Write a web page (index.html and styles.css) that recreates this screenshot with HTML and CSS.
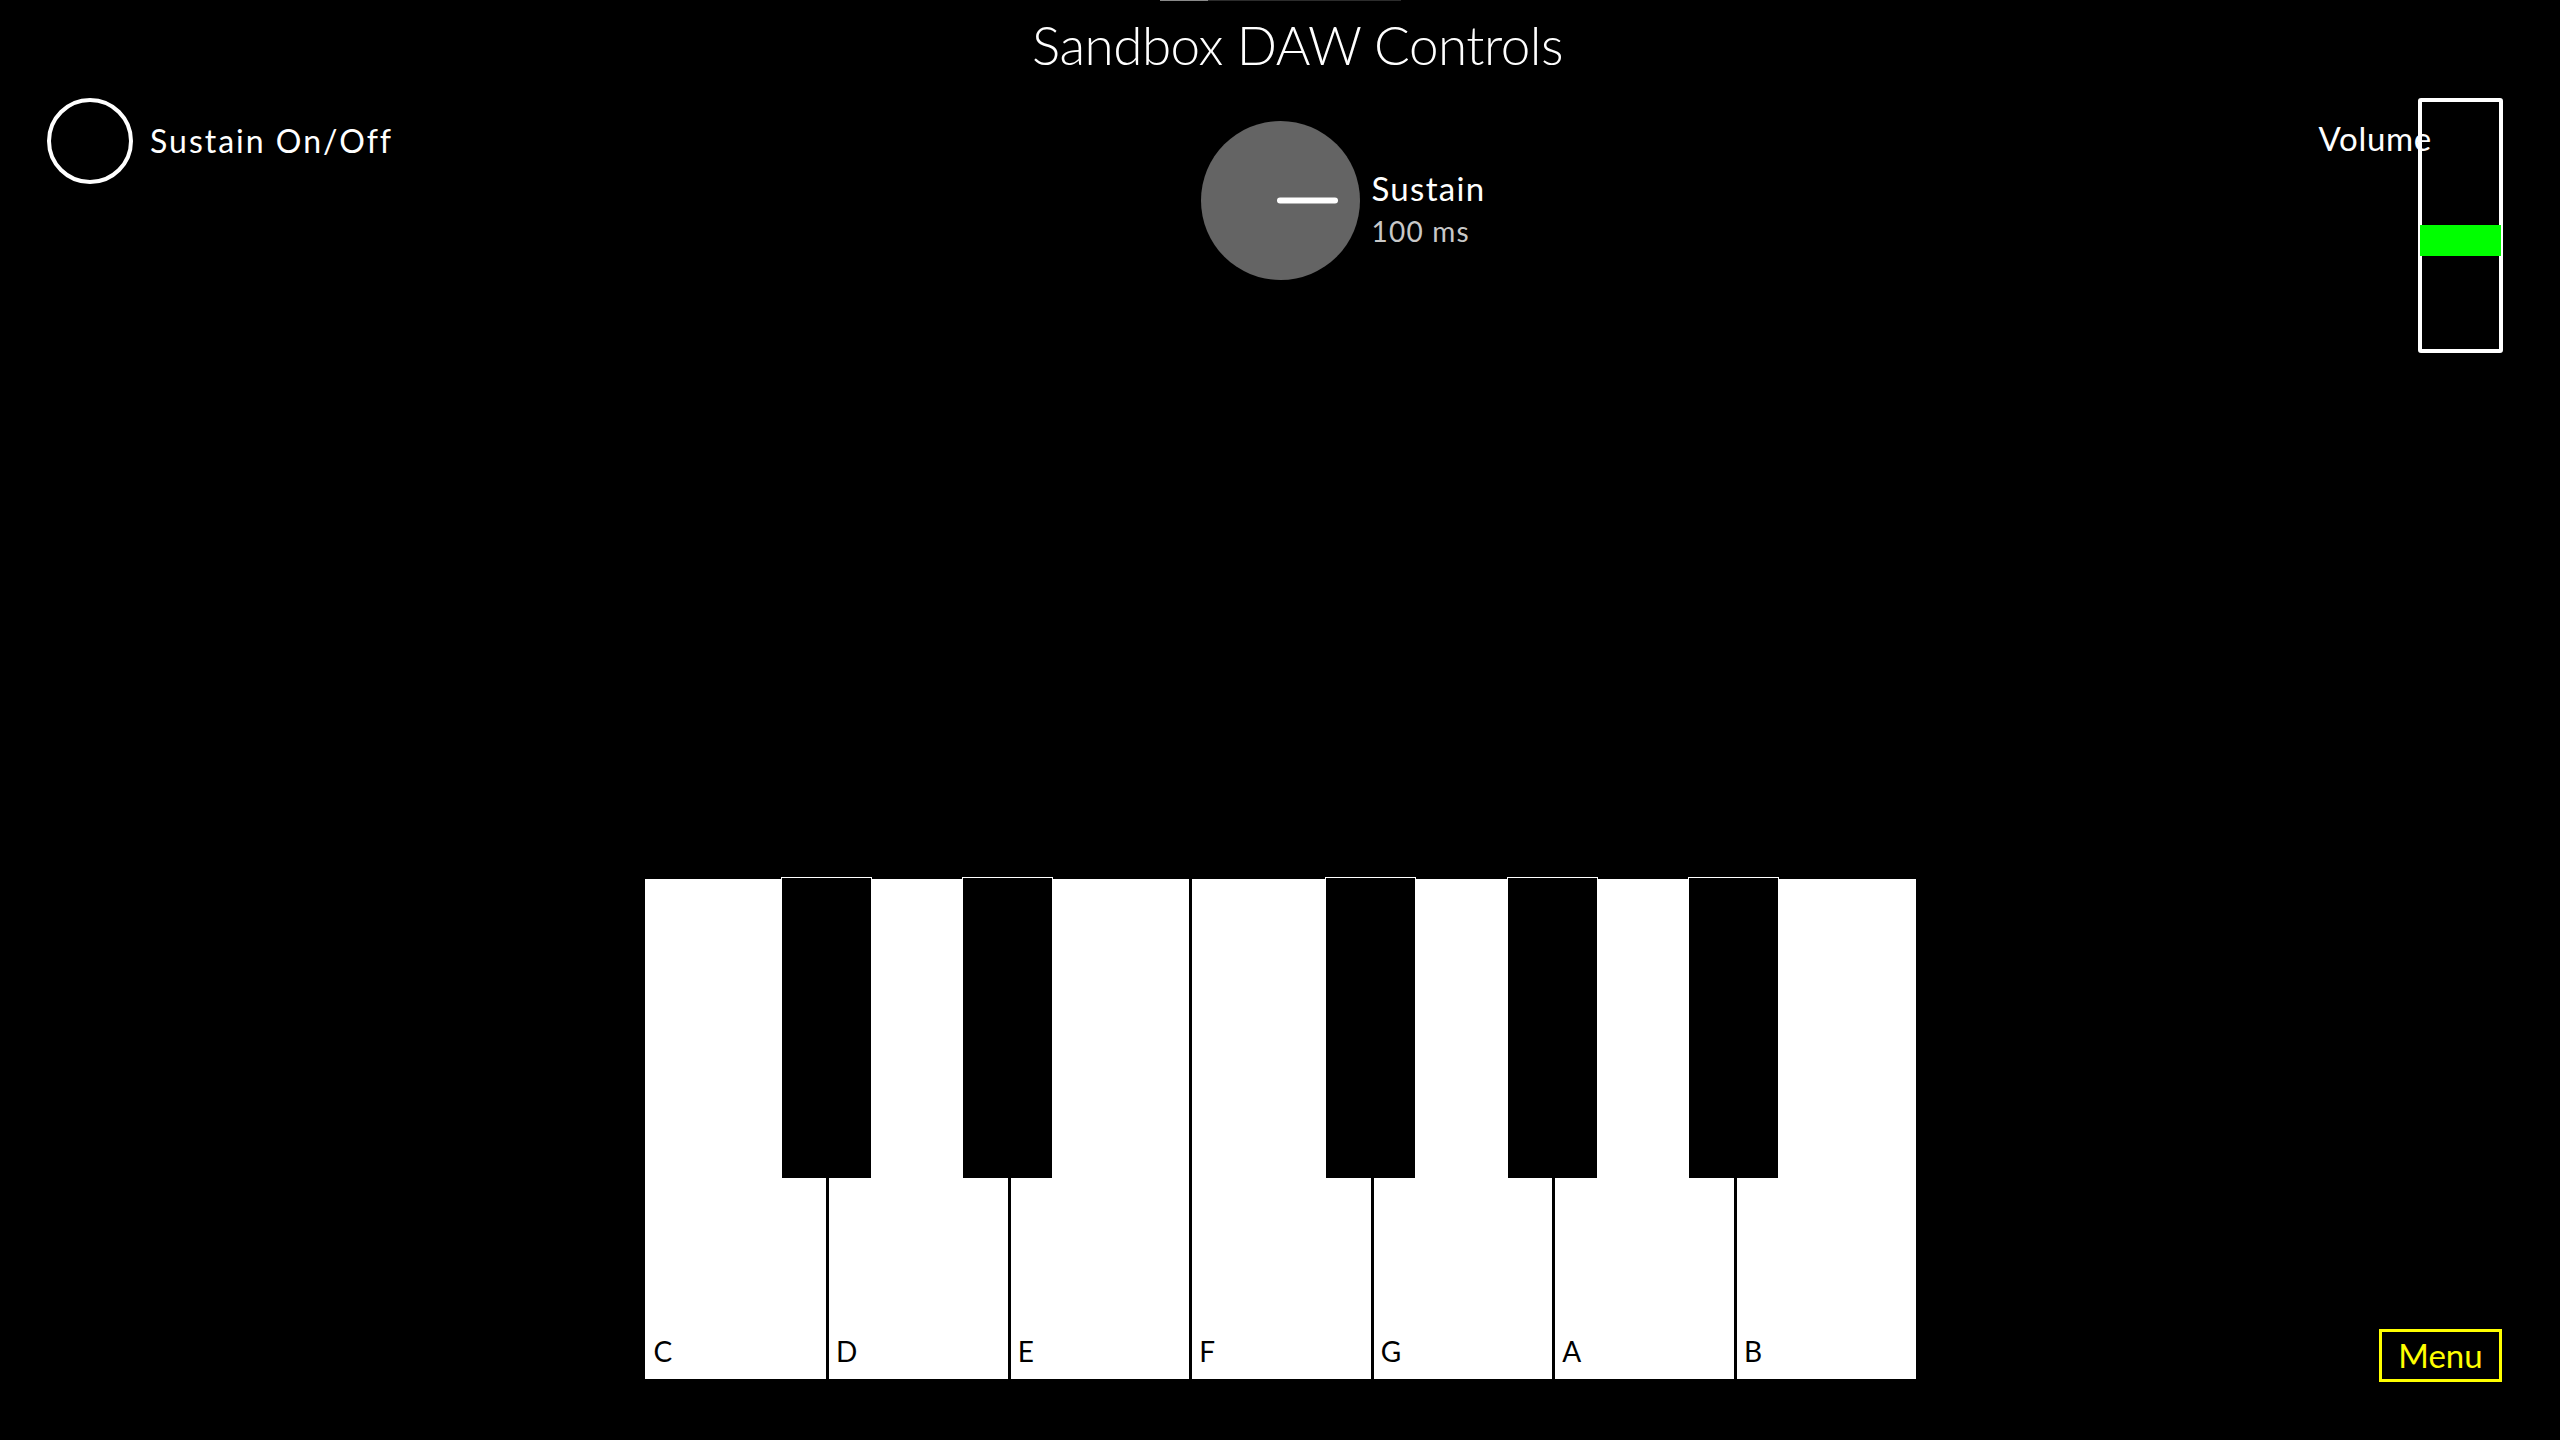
FILE: index.html
```html
<!DOCTYPE html>
<html lang="en">
<head>
<meta charset="utf-8">
<title>Sandbox DAW Controls</title>
<link rel="stylesheet" href="styles.css">
</head>
<body>
<div class="app">
  <div class="progress"><div class="progress-fill"></div></div>
  <h1 class="title">Sandbox DAW Controls</h1>

  <div class="controls">
    <div class="toggle">
      <div class="toggle-ring"></div>
      <span class="toggle-label">Sustain On/Off</span>
    </div>

    <div class="knob">
      <svg class="knob-svg" width="159" height="159" viewBox="0 0 159 159">
        <circle cx="79.5" cy="79.5" r="79.5" fill="#646464"/>
        <line x1="79" y1="79.5" x2="134" y2="79.5" stroke="#ffffff" stroke-width="6" stroke-linecap="round"/>
      </svg>
    </div>

    <div class="right-col">
      <div class="knob-label">
        <div class="knob-name">Sustain</div>
        <div class="knob-value">100 ms</div>
      </div>
      <div class="volume">
        <span class="volume-label">Volume</span>
        <div class="slider">
          <div class="slider-thumb"></div>
        </div>
      </div>
    </div>
  </div>

  <div class="spacer"></div>

  <div class="bottom">
    <div class="piano">
      <div class="wkey"><span class="klabel">C</span></div>
      <div class="wkey"><span class="klabel">D</span></div>
      <div class="wkey"><span class="klabel">E</span></div>
      <div class="wkey"><span class="klabel">F</span></div>
      <div class="wkey"><span class="klabel">G</span></div>
      <div class="wkey"><span class="klabel">A</span></div>
      <div class="wkey"><span class="klabel">B</span></div>
      <div class="bkey bkey-1"></div>
      <div class="bkey bkey-2"></div>
      <div class="bkey bkey-4"></div>
      <div class="bkey bkey-5"></div>
      <div class="bkey bkey-6"></div>
    </div>
    <button class="menu">Menu</button>
  </div>
</div>
</body>
</html>
```

FILE: styles.css
```css
* { box-sizing: border-box; }

html, body {
  margin: 0;
  padding: 0;
  background: #000;
}

body {
  font-family: "Lato", "DejaVu Sans", sans-serif;
  color: #fff;
}

.app {
  width: 2560px;
  height: 1440px;
  display: flex;
  flex-direction: column;
  overflow: hidden;
}

.progress {
  width: 241px;
  height: 1px;
  margin: 0 auto;
  background: #2c2c2c;
  display: flex;
}

.progress-fill {
  width: 48px;
  background: #8a8a8a;
}

.title {
  margin: 17px 0 6px 0;
  padding-left: 35px;
  text-align: center;
  font-size: 53px;
  line-height: 53px;
  font-weight: 300;
  letter-spacing: -0.5px;
}

.controls {
  display: grid;
  grid-template-columns: 1fr 159px 1fr;
  align-items: start;
}

.toggle {
  display: flex;
  align-items: center;
  gap: 17px;
  margin-top: 21px;
  padding-left: 47px;
}

.toggle-ring {
  width: 86px;
  height: 86px;
  border: 4px solid #fff;
  border-radius: 50%;
}

.toggle-label {
  font-size: 32px;
  line-height: 32px;
  letter-spacing: 2px;
}

.knob {
  margin-top: 44px;
}

.knob-svg { display: block; }

.right-col {
  display: flex;
  justify-content: space-between;
  align-items: flex-start;
  padding-right: 57px;
}

.knob-label {
  margin-left: 12px;
  margin-top: 95px;
}

.knob-name {
  font-size: 33px;
  line-height: 33px;
  letter-spacing: 1.3px;
}

.knob-value {
  margin-top: 12px;
  font-size: 28px;
  line-height: 28px;
  letter-spacing: 1.2px;
  color: #c8c8c8;
}

.volume {
  display: flex;
  align-items: flex-start;
}

.volume-label {
  position: relative;
  z-index: 1;
  margin-top: 45px;
  margin-right: -14px;
  font-size: 33px;
  line-height: 33px;
  letter-spacing: 0.7px;
}

.slider {
  position: relative;
  margin-top: 21px;
  width: 85px;
  height: 255px;
  border: 4px solid #fff;
  border-radius: 3px;
}

.slider-thumb {
  position: absolute;
  left: -2px;
  top: 123px;
  width: 81px;
  height: 31px;
  background: #00ff00;
}

.spacer { flex: 1; }

.bottom {
  display: grid;
  grid-template-columns: 1fr 1271px 1fr;
  align-items: end;
  padding-bottom: 58px;
}

.piano {
  grid-column: 2;
  position: relative;
  height: 500px;
  margin-bottom: 3px;
  display: grid;
  grid-template-columns: repeat(7, 1fr);
  background: #fff;
}

.wkey {
  display: flex;
  align-items: flex-end;
  padding-left: 9px;
  padding-bottom: 14px;
  background: #fff;
}

.wkey + .wkey {
  border-left: 3px solid #000;
  padding-left: 7px;
}

.klabel {
  font-size: 28px;
  line-height: 28px;
  color: #000;
}

.bkey {
  position: absolute;
  top: -2px;
  width: 91px;
  height: 301px;
  background: #000;
  border: 1px solid #fff;
  border-bottom: none;
}

.bkey-1 { left: calc(100% * 1 / 7 - 45.5px); }
.bkey-2 { left: calc(100% * 2 / 7 - 45.5px); }
.bkey-4 { left: calc(100% * 4 / 7 - 45.5px); }
.bkey-5 { left: calc(100% * 5 / 7 - 45.5px); }
.bkey-6 { left: calc(100% * 6 / 7 - 45.5px); }

.menu {
  grid-column: 3;
  justify-self: end;
  margin-right: 58px;
  width: 123px;
  height: 53px;
  display: flex;
  align-items: center;
  justify-content: center;
  padding: 0;
  background: transparent;
  border: 3px solid #ffff00;
  border-radius: 0;
  color: #ffff00;
  font-family: "Lato", "DejaVu Sans", sans-serif;
  font-size: 33px;
  line-height: 33px;
}
```
